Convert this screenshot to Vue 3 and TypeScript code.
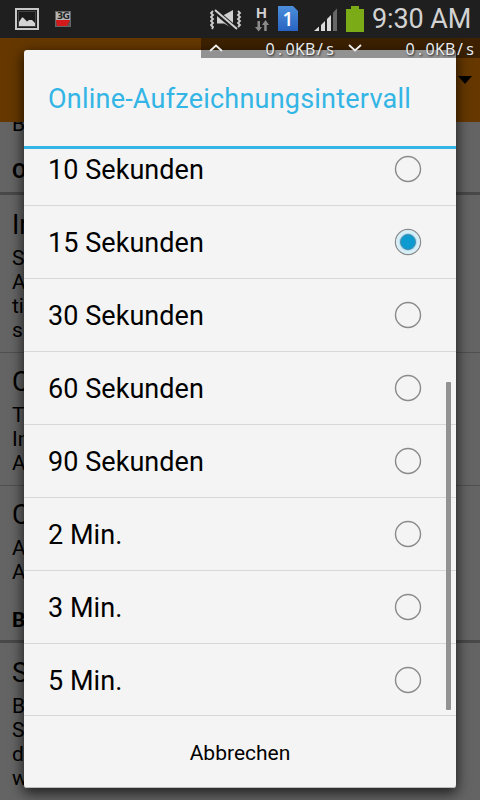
<script setup lang="ts">
import { ref } from 'vue'

interface Setting { title: string; lines: string[] }
interface Section { heading: string; settings: Setting[] }

const sections: Section[] = [
  {
    heading: 'O',
    settings: [
      { title: 'In', lines: ['S', 'A', 'ti', 's'] },
      { title: 'C', lines: ['T', 'In', 'A'] },
      { title: 'C', lines: ['A', 'A'] },
    ],
  },
  { heading: 'B', settings: [{ title: 'S', lines: ['B', 'S', 'd', 'w'] }] },
]

const options: string[] = [
  '10 Sekunden', '15 Sekunden', '30 Sekunden', '60 Sekunden',
  '90 Sekunden', '2 Min.', '3 Min.', '5 Min.',
]
const selected = ref<string>('15 Sekunden')
const rate = '0.0KB/s'
</script>

<template>
  <div class="screen">
    <header class="status">
      <svg class="i-picture" width="24" height="22" viewBox="0 0 24 22">
        <rect x="1" y="1" width="22" height="20" fill="#1b1b1b" stroke="#c9c9c9" stroke-width="2" />
        <rect x="3.500" y="3.500" width="17" height="15" fill="none" stroke="#444" />
        <path d="M4 18v-4l3-4.500h1l4 4 2-1.500h3l3 3v3z" fill="#d4d4d4" />
      </svg>
      <div class="i-3g">
        <span>3G</span>
        <svg width="14" height="6" viewBox="0 0 14 6"><path d="M0 0h14v6H0z" fill="#555" /><path d="M0 0h14l-3 6H1z" fill="#d2191b" /></svg>
      </div>
      <svg class="i-mute" width="32" height="22" viewBox="0 0 32 22">
        <path d="M7 6.500h6L23 1v18.500l-9-5H7z" fill="#d0d0d0" />
        <path d="M4 1l22 19" stroke="#1f1f1f" stroke-width="5" />
        <path d="M5 1l22 19" stroke="#d0d0d0" stroke-width="2" />
        <path d="M3 2l-2 2 2 2-2 2 2 2-2 2 2 2-2 2 2 2 -1 2M28 2l2 2-2 2 2 2-2 2 2 2-2 2 2 2-2 2" fill="none" stroke="#d0d0d0" stroke-width="1.800" />
      </svg>
      <div class="i-data">
        <span>H</span>
        <svg width="14" height="12" viewBox="0 0 14 12">
          <path d="M2.500 1h2.500v6h2L3.700 11.500 0 7h2.500zM9.200 11h2.500V5H14L10.500 0 7 5h2.200z" fill="#8b8b8b" />
        </svg>
      </div>
      <div class="i-sim">1</div>
      <svg class="i-signal" width="24" height="24" viewBox="0 0 24 24">
        <path d="M0 23l5-4.500V23zM7 17l4-4v10H7zM13 11l4-4v16h-4z" fill="#dadada" />
        <path d="M19 4.500l4-4V23h-4z" fill="#686868" />
      </svg>
      <svg class="i-battery" width="18" height="26" viewBox="0 0 18 26"><path d="M5 0h8v3h5v23H0V3h5z" fill="#7cab18" /></svg>
      <span class="clock">9:30 AM</span>
    </header>

    <main class="settings">
      <div class="cut">B</div>
      <section v-for="(section, i) in sections" :key="i">
        <h2>{{ section.heading }}</h2>
        <div v-for="(item, j) in section.settings" :key="j" class="setting">
          <h3>{{ item.title }}</h3>
          <p v-for="(line, k) in item.lines" :key="k">{{ line }}</p>
        </div>
      </section>
    </main>

    <div class="appbar">
      <svg width="14" height="8" viewBox="0 0 14 8"><path d="M0 0h14L7 8z" fill="#000" /></svg>
    </div>

    <div class="dialog">
      <h1><span>Online-Aufzeichnungsintervall</span></h1>
      <div class="list">
        <button v-for="option in options" :key="option" class="option" @click="selected = option">
          <span class="label">{{ option }}</span>
          <svg class="radio" width="28" height="28" viewBox="0 0 28 28">
            <circle cx="14" cy="14" r="12.500" fill="none" stroke="#8a8a8a" stroke-width="1.400" />
            <template v-if="selected === option">
              <circle cx="14" cy="14" r="10.300" fill="none" stroke="#d6eef7" stroke-width="3.200" />
              <circle cx="14" cy="14" r="8.900" fill="#a5d9ed" />
              <circle cx="14" cy="14" r="7.500" fill="#0c9bd0" stroke="#4a8ca8" stroke-width="1" />
            </template>
          </svg>
        </button>
        <div class="scrollbar"></div>
      </div>
      <button class="cancel"><span>Abbrechen</span></button>
    </div>

    <div class="traffic">
      <svg class="up" width="14" height="8" viewBox="0 0 14 8"><path d="M1 7l6-5.500L13 7" /></svg>
      <span class="rate"><i v-for="(ch, n) in rate" :key="n">{{ ch }}</i></span>
      <svg class="down" width="14" height="8" viewBox="0 0 14 8"><path d="M1 1l6 5.500L13 1" /></svg>
      <span class="rate"><i v-for="(ch, n) in rate" :key="n">{{ ch }}</i></span>
    </div>
  </div>
</template>

<style>
body { margin: 0; background: #646464; }
</style>

<style scoped>
.screen {
  position: relative;
  display: grid;
  grid-template-columns: 480px;
  grid-template-rows: 38px 84px 678px;
  width: 480px;
  height: 800px;
  overflow: hidden;
  background: #646464;
  color: #000;
  font-family: Roboto, sans-serif;
}
h1, h2, h3, p { margin: 0; font-weight: 400; }
button {
  padding: 0;
  border: 0;
  background: none;
  color: inherit;
  font-family: inherit;
  text-align: left;
}
svg { display: block; flex: none; }

.status {
  display: flex;
  grid-area: 1 / 1;
  padding-left: 15px;
  background: #1f1f1f;
  color: #d2d2d2;
}
.i-picture { margin-top: 8px; }
.i-3g {
  width: 14px;
  height: 14px;
  margin: 11px 0 0 16px;
  border: 1px solid #666;
  background: #b5b5b5;
  color: #222;
  font: bold 9px/8px "DejaVu Sans", sans-serif;
  letter-spacing: -0.7px;
  text-align: center;
}
.i-3g span { display: block; height: 8px; }
.i-mute { margin: 9px 0 0 139px; }
.i-data { width: 14px; margin: 6px 0 0 13px; }
.i-data span {
  display: block;
  height: 14px;
  padding-right: 1px;
  font: bold 15px/14px "Liberation Sans", sans-serif;
  text-align: center;
}
.i-sim {
  width: 20px;
  height: 25px;
  margin: 6px 0 0 9px;
  background: linear-gradient(#4b8edb, #2864c2);
  color: #fff;
  clip-path: polygon(0 0, 15px 0, 20px 5px, 20px 100%, 0 100%);
  font: 600 19px/26px "Open Sans", sans-serif;
  text-align: center;
}
.i-signal { margin: 8px 0 0 16px; }
.i-battery { margin: 6px 0 0 8px; }
.clock {
  margin-left: 8px;
  font-size: 27px;
  letter-spacing: -0.1px;
  line-height: 38px;
  white-space: nowrap;
}

.appbar {
  z-index: 1;
  display: flex;
  grid-area: 2 / 1;
  justify-content: flex-end;
  padding: 38px 8px 0 0;
  background: #663800;
}

.settings { grid-area: 2 / 1 / 4 / 2; padding-top: 74px; }
.cut {
  height: 24px;
  padding-left: 12px;
  font-size: 21px;
  line-height: 24px;
}
h2 {
  height: 59px;
  padding-left: 12px;
  box-sizing: border-box;
  border-bottom: 3px solid #484848;
  font-size: 21px;
  font-weight: 700;
  line-height: 70px;
}
section + section h2 { line-height: 72px; }
section + section { margin-top: -10px; }
.setting { padding: 13px 12px 10px; border-bottom: 1px solid #505050; }
h2 + .setting { padding-top: 14px; }
.setting:last-child { border-bottom: 0; }
h3 { margin-bottom: 5px; font-size: 27px; line-height: 32px; }
p { font-size: 21px; line-height: 24px; }

.dialog {
  position: absolute;
  z-index: 2;
  top: 50px;
  left: 24px;
  display: flex;
  flex-direction: column;
  width: 432px;
  height: 738px;
  border-radius: 3px;
  background: #f4f4f4;
  box-shadow: 0 4px 13px 1px rgba(0, 0, 0, 0.7), inset 0 -1px 0 #bdbdbd;
}
h1 {
  height: 99px;
  padding-left: 24px;
  box-sizing: border-box;
  border-bottom: 3px solid #33b5e5;
  color: #33b5e5;
  font-size: 27px;
  letter-spacing: 0.22px;
  line-height: 99px;
  white-space: nowrap;
}
.list {
  position: relative;
  display: flex;
  flex-direction: column;
  justify-content: flex-end;
  height: 567px;
  box-sizing: border-box;
  border-bottom: 1px solid #d8d8d8;
  overflow: hidden;
}
.option {
  display: flex;
  flex: none;
  align-items: center;
  justify-content: space-between;
  width: 100%;
  height: 73px;
  padding: 0 34px 0 24px;
  box-sizing: border-box;
  border-bottom: 1px solid #d8d8d8;
}
.option:nth-last-child(2) { height: 71px; border-bottom: 0; }
.label { padding-top: 2px; font-size: 27px; letter-spacing: 0.05px; line-height: 32px; }
.scrollbar {
  position: absolute;
  right: 5px;
  bottom: 5px;
  width: 5px;
  height: 328px;
  border-radius: 1px;
  background: #929292;
}
.cancel { height: 72px; font-size: 21px; line-height: 75px; text-align: center; }

.traffic {
  position: absolute;
  z-index: 3;
  top: 38px;
  left: 201px;
  display: flex;
  width: 279px;
  height: 20px;
  padding-left: 8px;
  box-sizing: border-box;
  background: rgba(0, 0, 0, 0.4);
  color: #f0f0f0;
  font: 500 16px/22px "Open Sans", sans-serif;
  text-shadow: 1px 1px 2px #222;
}
.rate { display: grid; grid-template-columns: repeat(7, 10px); }
.rate i { font-style: normal; text-align: center; }
.traffic path { fill: none; stroke: #eee; stroke-width: 1.8; }
.up { margin: 6px 42px 0 0; }
.down { margin: 6px 43px 0 13px; }
</style>
